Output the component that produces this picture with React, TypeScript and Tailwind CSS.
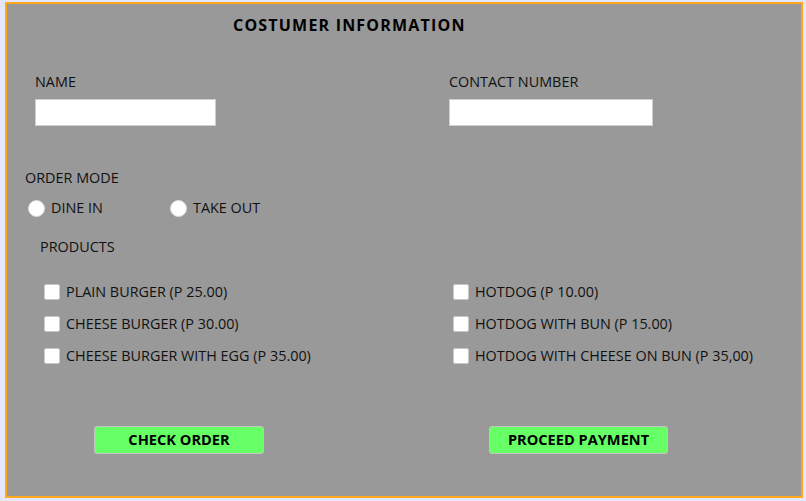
import { useState } from 'react';

const leftProducts = ['PLAIN BURGER (P 25.00)', 'CHEESE BURGER (P 30.00)', 'CHEESE BURGER WITH EGG (P 35.00)'];
const rightProducts = ['HOTDOG (P 10.00)', 'HOTDOG WITH BUN (P 15.00)', 'HOTDOG WITH CHEESE ON BUN (P 35,00)'];

function Check({ label }: { label: string }) {
  const [on, setOn] = useState(false);
  return (
    <label className="flex items-center h-5 cursor-pointer">
      <span
        onClick={() => setOn(!on)}
        className="w-4 h-4 bg-white border border-[#c8c8c8] rounded-[2px] flex items-center justify-center text-[11px] leading-none"
      >
        {on ? '✓' : ''}
      </span>
      <span className="ml-[6px]">{label}</span>
    </label>
  );
}

export default function App() {
  const [mode, setMode] = useState('');

  return (
    <div className="w-[806px] h-[501px] bg-[#e6e6fa] pl-[5px] pt-[2px] font-['Open_Sans',sans-serif] text-[14.4px] text-[#111]">
      <div className="w-[798px] h-[496px] border-2 border-[#ffa81c] bg-[#999999]">
        {/* Title */}
        <h1 className="mt-[11px] pl-[226px] h-5 leading-5 text-[16px] font-bold tracking-[1.2px] text-black">
          COSTUMER INFORMATION
        </h1>

        {/* Name / contact */}
        <div className="flex mt-[37px] pl-[28px]">
          <div className="w-[414px]">
            <div className="h-5 leading-5">NAME</div>
            <input className="mt-[7px] w-[181px] h-[27px] bg-white border border-[#cfcfcf] outline-none px-1" />
          </div>
          <div>
            <div className="h-5 leading-5">CONTACT NUMBER</div>
            <input className="mt-[7px] w-[204px] h-[27px] bg-white border border-[#cfcfcf] outline-none px-1" />
          </div>
        </div>

        {/* Order mode */}
        <div className="mt-[42px] pl-[18px] h-5 leading-5">ORDER MODE</div>
        <div className="flex mt-[10px] pl-[21px] h-5 items-center">
          {['DINE IN', 'TAKE OUT'].map((m, i) => (
            <label
              key={m}
              onClick={() => setMode(m)}
              className={`flex items-center cursor-pointer ${i === 0 ? 'w-[142px]' : ''}`}
            >
              <span className="w-[17px] h-[17px] rounded-full bg-white border border-[#dcdcdc] flex items-center justify-center">
                {mode === m && <span className="w-[7px] h-[7px] rounded-full bg-black" />}
              </span>
              <span className="ml-[6px]">{m}</span>
            </label>
          ))}
        </div>

        <div className="mt-[19px] pl-[33px] h-5 leading-5">PRODUCTS</div>

        {/* Products */}
        <div className="flex mt-[25px] pl-[37px]">
          <div className="w-[409px] flex flex-col gap-3">
            {leftProducts.map(p => <Check key={p} label={p} />)}
          </div>
          <div className="flex flex-col gap-3">
            {rightProducts.map(p => <Check key={p} label={p} />)}
          </div>
        </div>

        {/* Buttons */}
        <div className="flex mt-[60px] pl-[87px]">
          <button className="w-[170px] h-[28px] bg-[#66ff66] border border-[#c4c4c4] rounded-[3px] font-bold text-[14.6px] text-black">
            CHECK ORDER
          </button>
          <button className="ml-[225px] w-[179px] h-[28px] bg-[#66ff66] border border-[#c4c4c4] rounded-[3px] font-bold text-[14.6px] text-black">
            PROCEED PAYMENT
          </button>
        </div>
      </div>
    </div>
  );
}
